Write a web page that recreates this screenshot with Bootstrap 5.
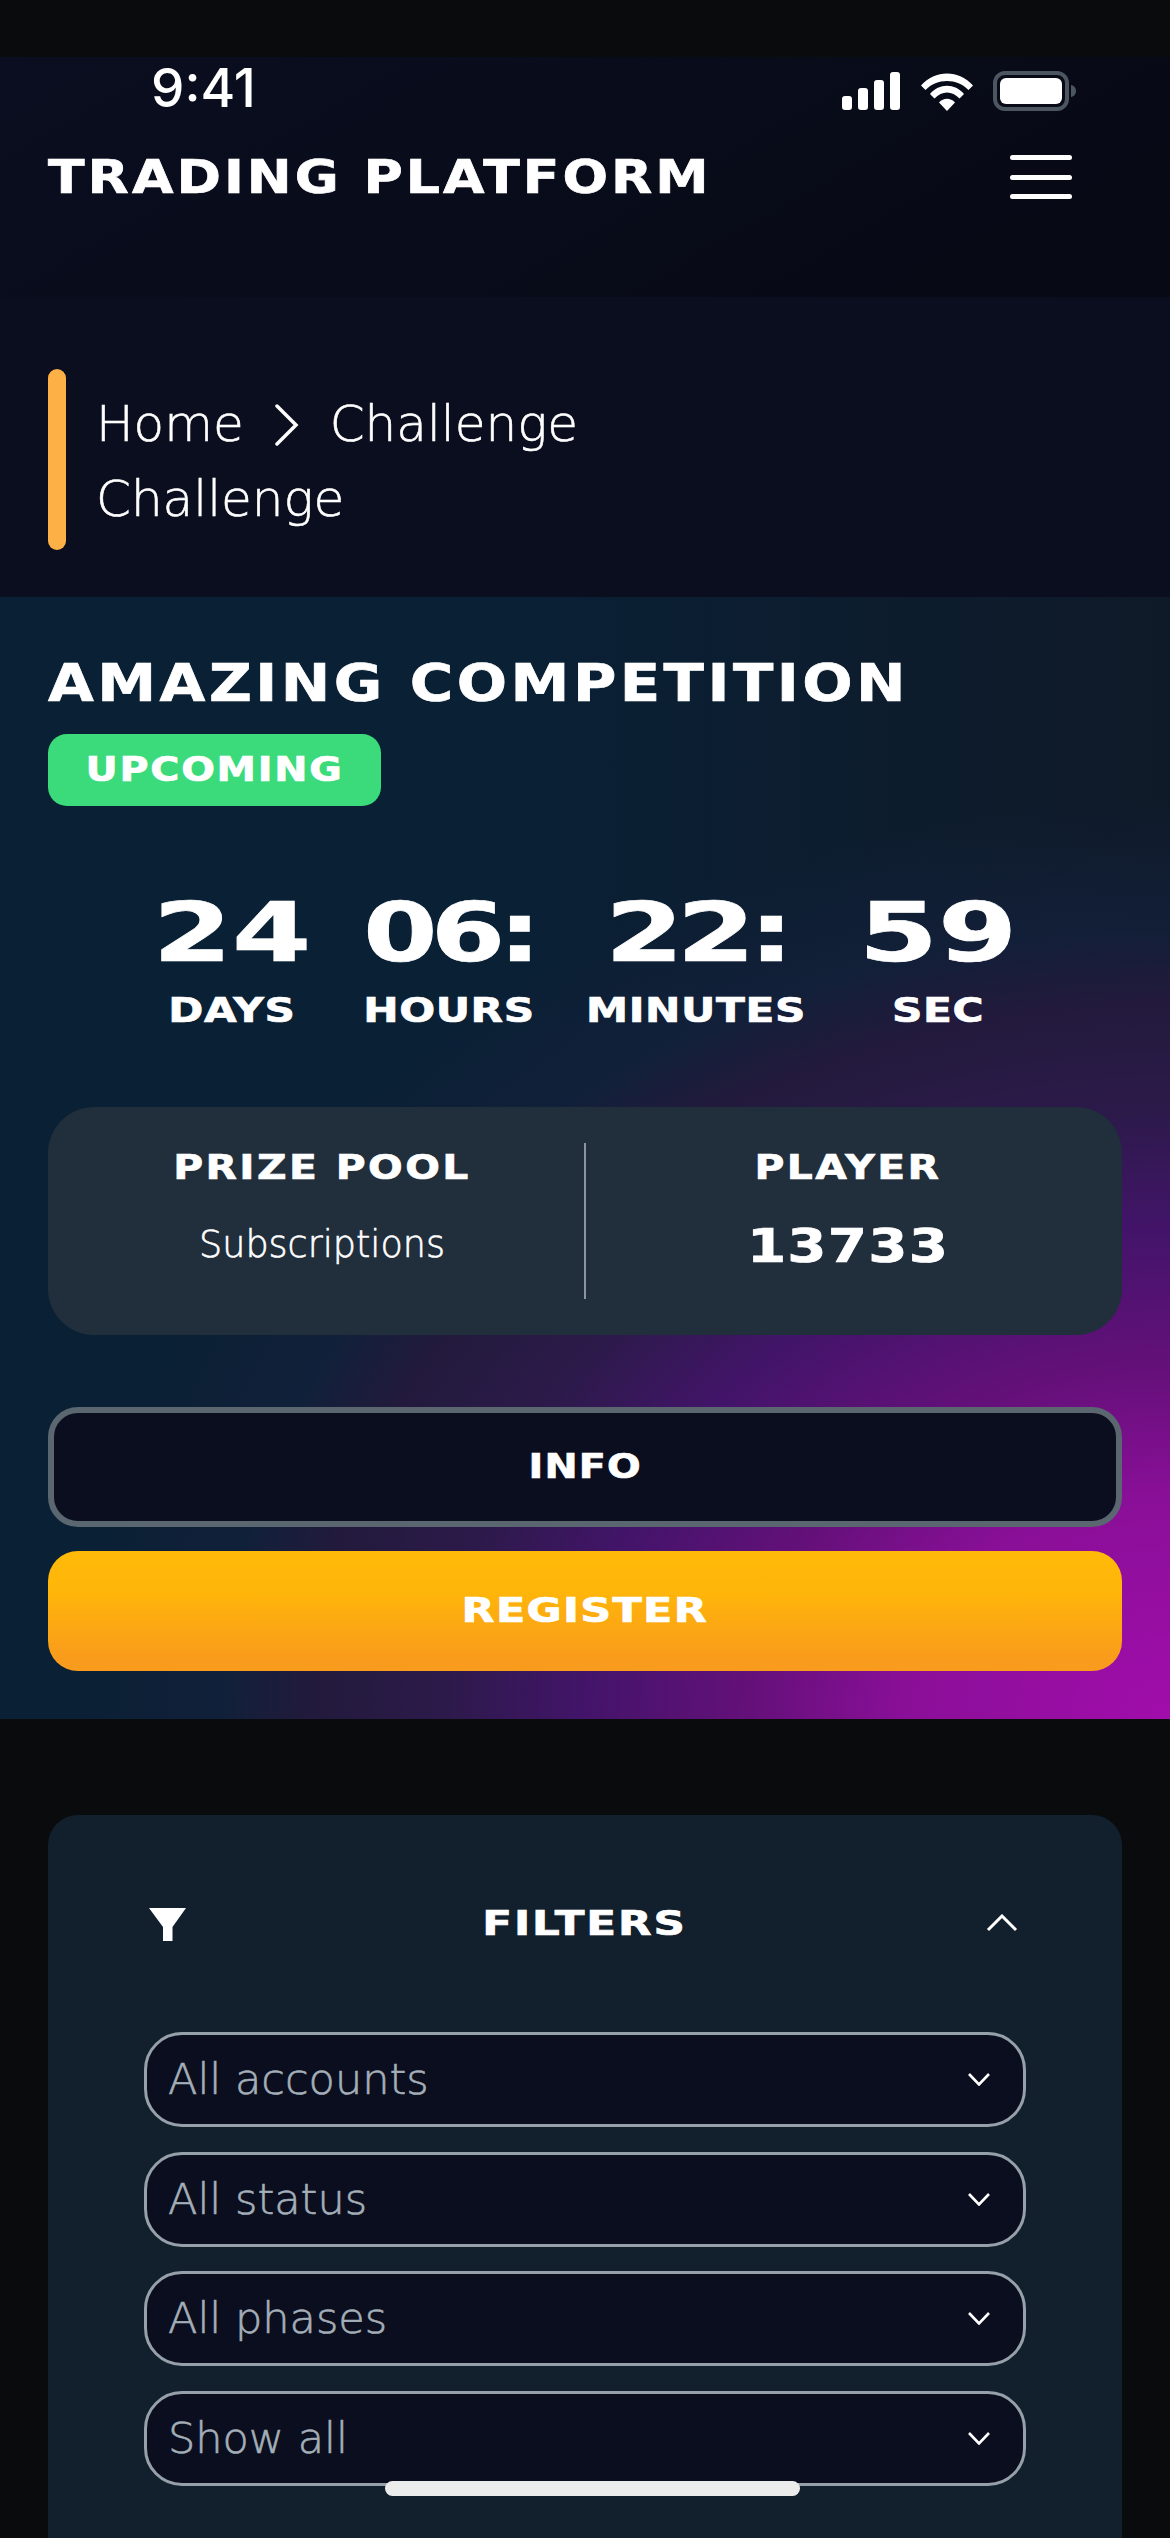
<!DOCTYPE html>
<html lang="en">
<head>
    <meta charset="UTF-8">
    <meta name="viewport" content="width=device-width, initial-scale=1.0">
    <title>Trading Platform</title>
    <link href="https://cdn.jsdelivr.net/npm/bootstrap@5.3.0/dist/css/bootstrap.min.css" rel="stylesheet">
    <style>
        html, body { height: 2538px; overflow: hidden; }
        body { background: #0a0b0d; color: #fff; font-family: "DejaVu Sans", sans-serif; }
        .disp { font-family: "DejaVu Sans", sans-serif; font-weight: 700; color: #fff; -webkit-text-stroke: 0.7px #fff; }
        .light-txt { font-family: "DejaVu Sans", sans-serif; font-weight: 200; -webkit-text-stroke: 0.6px currentColor; }
        .wide { display: inline-block; white-space: nowrap; transform: scaleX(var(--sx, 1.25)); }
        .wide-left { transform-origin: left center; }

        .top-strip { height: 57px; }
        .app-head { height: 240px; background: linear-gradient(150deg, #0b0e20 0%, #080b18 60%, #070a14 100%); padding: 0 48px; }
        .status-row { height: 54px; padding-top: 6px; }
        .clock { font-family: "Inter", sans-serif; font-weight: 500; font-size: 53px; line-height: 50px; margin-left: 103px; letter-spacing: 0; }
        .status-icons { margin-right: 45px; margin-top: 9px; gap: 21px; }
        .brand-name { font-size: 46px; line-height: 56px; letter-spacing: 2.6px; padding: 0; margin: 0; --sx: 1.165; }
        .app-head .navbar { padding: 38px 0 0; }
        .burger { width: 62px; height: 44px; border: 0; background: none; padding: 0; margin-right: 50px; display: flex; flex-direction: column; justify-content: space-between; }
        .burger span { display: block; height: 5px; background: #fff; border-radius: 3px; }

        .crumb-wrap { height: 300px; background: #0b0e1e; padding: 72px 48px 0; }
        .crumb-bar { width: 18px; height: 181px; background: #fdb045; border-radius: 9px; }
        .crumb-text { margin-left: 30px; font-size: 50px; line-height: 75px; padding-top: 18px; }
        .crumb-text .breadcrumb { margin: 0; align-items: center; --bs-breadcrumb-margin-bottom: 0; }
        .crumb-text .breadcrumb-item + .breadcrumb-item { padding-left: 0; }
        .crumb-text .breadcrumb-item + .breadcrumb-item::before { display: none; }
        .crumb-text a { color: #fff; text-decoration: none; }
        .crumb-text .breadcrumb-item.active { color: #fff; }
        .crumb-sep { margin: 0 30px 0 31px; display: block; }

        .hero { height: 1122px; padding: 57px 48px 0; background:
            radial-gradient(ellipse 1100px 920px at 100% 100%, #a10dab 0%, #8a0f98 24%, #65107a 38%, #43146a 53%, #2c1a4a 66%, #221a3c 78%, rgba(19,32,59,.8) 86%, rgba(10,32,53,0) 100%),
            linear-gradient(90deg, #0a2034 0%, #0a2035 45%, #0f1a28 100%); }
        .hero-title { font-size: 51px; line-height: 60px; letter-spacing: 3px; margin: 0; --sx: 1.16; }
        .state-tag { width: 333px; height: 72px; margin-top: 20px; background: #3bdb7c; border-radius: 19px; font-size: 33px; letter-spacing: 1.5px; --bs-badge-padding-x: 0; --bs-badge-padding-y: 0; line-height: 72px; display: block; --sx: 1.2; }

        .count-row { margin-top: 87px; gap: 52px; }
        .count-num { font-size: 82px; line-height: 80px; display: block; --sx: 1.39; }
        .col-b .count-num { letter-spacing: -5px; --sx: 1.3; }
        .col-c .count-num { letter-spacing: -5px; --sx: 1.38; }
        .count-lbl { font-size: 33px; line-height: 40px; margin-top: 18px; letter-spacing: 0.5px; display: block; --sx: 1.28; }
        .count-col { text-align: center; }
        .col-a { width: 160px; } .col-b { width: 170px; } .col-c { width: 220px; }

        .stat-box { height: 228px; margin-top: 76px; background: #212e3c; border-radius: 46px; border: 0; padding: 36px 12px; }
        .stat-col { flex: 1 1 0; text-align: center; }
        .stat-col + .stat-col { border-left: 2px solid #8b959e; }
        .stat-lbl { font-size: 34px; line-height: 40px; letter-spacing: 2px; margin-top: 4px; --sx: 1.2; }
        .stat-sub { font-size: 36.5px; line-height: 48px; margin-top: 34px; }
        .stat-val { font-size: 47px; line-height: 48px; margin-top: 35px; letter-spacing: 1px; --sx: 1.2; }

        .act-btn { display: block; width: 100%; height: 120px; border-radius: 30px; font-size: 33px; color: #fff; letter-spacing: 1px; }
        .btn-info-dark { margin-top: 72px; background: #0b0e1e; border: 6px solid #5a6670; --sx: 1.2; }
        .btn-register { margin-top: 24px; border: 0; background: linear-gradient(180deg, #ffba08 0%, #ffb50a 35%, #f99b1c 90%); --sx: 1.3; }

        .filter-box { margin-top: 96px; margin-inline: 48px; background: #12202d; border-radius: 30px 30px 0 0; border: 0; padding: 0 96px 60px; height: 732px; }
        .filter-head { height: 217px; padding-top: 1px; }
        .filter-head .disp { font-size: 33px; letter-spacing: 1.5px; line-height: 40px; --sx: 1.32; margin-right: 4px; }
        .filter-list { gap: 24.6px; }
        .filter-list .form-select {
            height: 95px; border: 3px solid #95a0aa; border-radius: 38px; background-color: #0b0e1e;
            color: #a3aeb8; font-family: "DejaVu Sans", sans-serif; font-weight: 200; -webkit-text-stroke: 0.6px #a3aeb8; font-size: 43px; padding: 0 60px 0 21px;
            background-image: url("data:image/svg+xml,%3csvg xmlns='http://www.w3.org/2000/svg' viewBox='0 0 22 13'%3e%3cpath fill='none' stroke='%23fff' stroke-width='2.6' d='M1 1l10 10.5L21 1'/%3e%3c/svg%3e");
            background-size: 22px 13px; background-position: right 33px center;
        }
        .home-bar { position: absolute; left: 385px; top: 2481px; width: 415px; height: 15px; border-radius: 8px; background: #ececec; }
    </style>
</head>
<body>
<div class="top-strip"></div>

<header class="app-head">
    <div class="status-row d-flex justify-content-between align-items-start">
        <div class="clock">9:41</div>
        <div class="status-icons d-flex align-items-start">
            <svg width="58" height="38" viewBox="0 0 58 38"><g fill="#fff"><rect x="0" y="24" width="10" height="14" rx="3"/><rect x="16" y="16" width="10" height="22" rx="3"/><rect x="32" y="8" width="10" height="30" rx="3"/><rect x="48" y="0" width="10" height="38" rx="3"/></g></svg>
            <svg width="52" height="39" viewBox="0 0 52 39"><g fill="#fff"><path d="M0 13.5C14-2.5 38-2.500 52 13.500L47.500 18C36 6 16 6 4.500 18Z"/><path d="M9 22C18 11 34 11 43 22L38.500 26.500C31 18.500 21 18.500 13.500 26.500Z"/><path d="M18 30.500C22.500 25.500 29.500 25.500 34 30.500L26 39Z"/></g></svg>
            <svg width="84" height="40" viewBox="0 0 84 40" style="margin-left:-1px;margin-top:-1px"><rect x="2" y="2" width="72" height="36" rx="10" fill="none" stroke="#4b5661" stroke-width="4"/><rect x="7" y="7" width="62" height="26" rx="6" fill="#fff"/><path d="M78 14c3 .5 5 3 5 6s-2 5.500-5 6Z" fill="#4b5661"/></svg>
        </div>
    </div>
    <nav class="navbar">
        <span class="navbar-brand disp brand-name wide wide-left">TRADING PLATFORM</span>
        <button class="burger" type="button" aria-label="Menu"><span></span><span></span><span></span></button>
    </nav>
</header>

<section class="crumb-wrap d-flex align-items-start">
    <div class="crumb-bar"></div>
    <div class="crumb-text light-txt">
        <nav aria-label="breadcrumb">
            <ol class="breadcrumb">
                <li class="breadcrumb-item"><a href="#">Home</a></li>
                <li class="breadcrumb-item d-flex align-items-center active">
                    <svg class="crumb-sep" width="25" height="42" viewBox="0 0 25 42"><path d="M2 2l19 19L2 40" fill="none" stroke="#fff" stroke-width="3.500" stroke-linecap="round"/></svg>
                    Challenge
                </li>
            </ol>
        </nav>
        <div>Challenge</div>
    </div>
</section>

<section class="hero">
    <h1 class="disp hero-title wide wide-left">AMAZING COMPETITION</h1>
    <span class="badge disp state-tag"><span class="wide">UPCOMING</span></span>

    <div class="count-row d-flex justify-content-center">
        <div class="count-col col-a"><span class="disp count-num wide">24</span><span class="disp count-lbl wide">DAYS</span></div>
        <div class="count-col col-b"><span class="disp count-num wide">06:</span><span class="disp count-lbl wide">HOURS</span></div>
        <div class="count-col col-c"><span class="disp count-num wide">22:</span><span class="disp count-lbl wide">MINUTES</span></div>
        <div class="count-col col-a"><span class="disp count-num wide">59</span><span class="disp count-lbl wide">SEC</span></div>
    </div>

    <div class="card stat-box d-flex flex-row">
        <div class="stat-col">
            <div class="disp stat-lbl wide">PRIZE POOL</div>
            <div class="stat-sub light-txt">Subscriptions</div>
        </div>
        <div class="stat-col">
            <div class="disp stat-lbl wide">PLAYER</div>
            <div class="disp stat-val wide d-block">13733</div>
        </div>
    </div>

    <button class="btn disp act-btn btn-info-dark" type="button"><span class="wide">INFO</span></button>
    <button class="btn disp act-btn btn-register" type="button"><span class="wide">REGISTER</span></button>
</section>

<section class="card filter-box">
    <div class="filter-head d-flex justify-content-between align-items-center">
        <svg width="38" height="33" viewBox="0 0 38 33" style="margin-left:5px"><path d="M0 0H37L23.500 19V33H14V19Z" fill="#fff"/></svg>
        <span class="disp wide">FILTERS</span>
        <svg width="32" height="18" viewBox="0 0 32 18" style="margin-right:8px;margin-bottom:3px"><path d="M2 16L16 2l14 14" fill="none" stroke="#fff" stroke-width="3"/></svg>
    </div>
    <form class="filter-list d-flex flex-column">
        <select class="form-select"><option>All accounts</option></select>
        <select class="form-select"><option>All status</option></select>
        <select class="form-select"><option>All phases</option></select>
        <select class="form-select"><option>Show all</option></select>
    </form>
</section>

<div class="home-bar"></div>
<script src="https://cdn.jsdelivr.net/npm/bootstrap@5.3.0/dist/js/bootstrap.bundle.min.js"></script>
</body>
</html>
